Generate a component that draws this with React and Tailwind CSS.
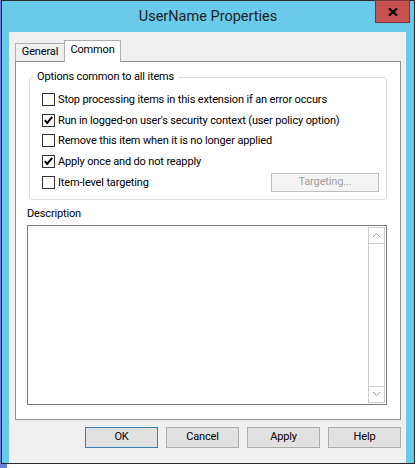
import React from "react";

const options = [
  { label: "Stop processing items in this extension if an error occurs", checked: false },
  { label: "Run in logged-on user's security context (user policy option)", checked: true },
  { label: "Remove this item when it is no longer applied", checked: false },
  { label: "Apply once and do not reapply", checked: true },
];

function CheckBox({ checked }) {
  return (
    <span className="w-[13px] h-[13px] border border-[#333333] bg-white flex items-center justify-center shrink-0">
      {checked && (
        <svg width="11" height="11" viewBox="0 0 11 11">
          <path d="M1.8 5.2 L4.2 8 L9.2 1.8" stroke="#000" strokeWidth="2" fill="none" />
        </svg>
      )}
    </span>
  );
}

function Row({ label, checked, children }) {
  return (
    <div className="h-[20.75px] flex items-center pl-[12px] pr-[7px] whitespace-nowrap">
      <CheckBox checked={checked} />
      <span className="ml-[3px] leading-none">{label}</span>
      {children}
    </div>
  );
}

function DialogButton({ label, primary }) {
  return (
    <button
      className={`w-[73px] h-[21px] bg-[#e1e1e1] border flex items-center justify-center text-black ${
        primary ? "border-[#3c7fb1]" : "border-[#adadad]"
      }`}
    >
      {label}
    </button>
  );
}

function Chevron({ up }) {
  return (
    <svg width="9" height="6" viewBox="0 0 9 6">
      <path d={up ? "M1 5 L4.5 1.5 L8 5" : "M1 1 L4.5 4.5 L8 1"} stroke="#9c9c9c" strokeWidth="1" fill="none" />
    </svg>
  );
}

export default function App() {
  return (
    <div className="w-[420px] h-[468px] bg-white flex flex-col text-[11px] tracking-[-0.15px] text-black font-['Roboto',sans-serif] overflow-hidden">
      <div className="flex">
        <div className="w-px bg-[#6b7fd6]" />
        {/* Window frame */}
        <div className="w-[414px] h-[464px] border border-[#2b2b2e] bg-[#69cbe9] flex flex-col">
          {/* Title bar */}
          <div className="h-[31px] grid grid-cols-[1fr_auto_1fr] items-start">
            <div />
            <div className="h-[32px] flex items-center text-[14.5px] tracking-normal text-[#1e1e1e]">UserName Properties</div>
            <div className="flex justify-end pr-[4px]">
              <div className="w-[35px] h-[23px] -mt-px bg-[#c75050] border border-[#7b3535] flex items-center justify-center">
                <svg width="10" height="8" viewBox="0 0 10 8">
                  <path d="M1 0.5 L9 7.5 M9 0.5 L1 7.5" stroke="#000" strokeWidth="2.2" />
                </svg>
              </div>
            </div>
          </div>

          {/* Client area */}
          <div className="flex-1 ml-[7px] mr-[8px] bg-[#f0f0f0] flex flex-col pt-[8px] pb-[8px]">
            <div className="pl-[6px] pr-[5px]">
              {/* Tabs */}
              <div className="h-[21px] flex items-end">
                <div className="w-[50px] h-[18px] bg-[#f0f0f0] border-l border-t border-r border-[#adadad] flex items-center justify-center">
                  General
                </div>
                <div className="w-[57px] h-[22px] -ml-px -mb-px relative z-10 bg-white border-l border-t border-r border-[#adadad] flex items-center justify-center pb-[2px]">
                  Common
                </div>
              </div>

              {/* Tab page */}
              <div className="h-[359px] bg-white border border-[#8f8f8f] flex flex-col pt-[7px]">
                <fieldset className="mx-[13px] border border-[#dcdcdc] rounded-[3px] pb-[6px]">
                  <legend className="ml-[4px] pl-[3px] pr-[4px] h-[16px] leading-[16px]">Options common to all items</legend>
                  <div className="pt-[4px]">
                    {options.map((o) => (
                      <Row key={o.label} label={o.label} checked={o.checked} />
                    ))}
                    <Row label="Item-level targeting" checked={false}>
                      <div className="ml-auto w-[108px] h-[19px] bg-[#f4f4f4] border border-[#bfbfbf] text-[#a0a0a0] flex items-center justify-center">
                        Targeting...
                      </div>
                    </Row>
                  </div>
                </fieldset>

                <div className="ml-[11px] mt-[6px] h-[16px] leading-[16px]">Description</div>
                <div className="ml-[11px] mr-[13px] mt-[3px] h-[180px] border border-[#7a7a7a] p-px flex">
                  <div className="flex-1" />
                  <div className="w-[17px] border border-[#cdcdcd] flex flex-col justify-between">
                    <div className="h-[16px] border-b border-[#cdcdcd] flex items-center justify-center">
                      <Chevron up />
                    </div>
                    <div className="h-[16px] border-t border-[#cdcdcd] flex items-center justify-center">
                      <Chevron />
                    </div>
                  </div>
                </div>
              </div>
            </div>

            {/* Buttons */}
            <div className="mt-[7px] pr-[5px] flex justify-end gap-[8px]">
              <DialogButton label="OK" primary />
              <DialogButton label="Cancel" />
              <DialogButton label="Apply" />
              <DialogButton label="Help" />
            </div>
          </div>
        </div>
      </div>
      <div className="h-[4px] flex">
        <div className="w-[7px] bg-[#6b7fd6]" />
      </div>
    </div>
  );
}
